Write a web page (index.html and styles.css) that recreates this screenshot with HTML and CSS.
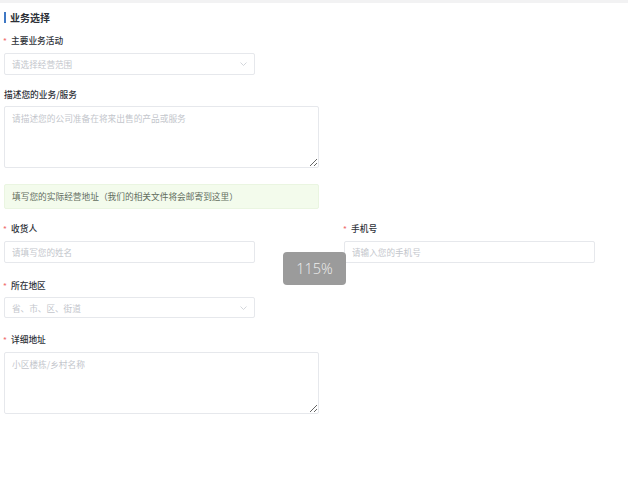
FILE: index.html
```html
<!DOCTYPE html>
<html lang="zh-CN">
<head>
<meta charset="utf-8">
<title>业务选择</title>
<link rel="stylesheet" href="styles.css">
</head>
<body>
<div class="strip"></div>
<div class="page">
  <div class="title"><span class="bar"></span>业务选择</div>

  <div class="field field-first">
    <div class="label"><span class="star">*</span>主要业务活动</div>
    <div class="select">
      <span class="ph">请选择经营范围</span>
      <svg class="arrow" width="7" height="4" viewBox="0 0 7 4"><path d="M0.5 0.5 L3.5 3.5 L6.5 0.5" fill="none" stroke="#c8ccd2" stroke-width="0.8"/></svg>
    </div>
  </div>

  <div class="field field-ta">
    <div class="label label-ta">描述您的业务/服务</div>
    <textarea class="ta" placeholder="请描述您的公司准备在将来出售的产品或服务"></textarea>
  </div>

  <div class="alert">填写您的实际经营地址（我们的相关文件将会邮寄到这里）</div>

  <div class="row">
    <div class="field">
      <div class="label"><span class="star">*</span>收货人</div>
      <input class="input" placeholder="请填写您的姓名">
    </div>
    <div class="field">
      <div class="label"><span class="star">*</span>手机号</div>
      <input class="input" placeholder="请输入您的手机号">
    </div>
  </div>

  <div class="field field-region">
    <div class="label label-ta"><span class="star">*</span>所在地区</div>
    <div class="select select-sm">
      <span class="ph">省、市、区、街道</span>
      <svg class="arrow" width="7" height="4" viewBox="0 0 7 4"><path d="M0.5 0.5 L3.5 3.5 L6.5 0.5" fill="none" stroke="#c8ccd2" stroke-width="0.8"/></svg>
    </div>
  </div>

  <div class="field field-detail">
    <div class="label"><span class="star">*</span>详细地址</div>
    <textarea class="ta" placeholder="小区楼栋/乡村名称"></textarea>
  </div>
</div>
<div class="zoom">115%</div>
</body>
</html>
```

FILE: styles.css
```css
html, body {
  margin: 0;
  padding: 0;
  background: #ffffff;
  font-family: "Noto Sans CJK SC", "Noto Sans", sans-serif;
}
.strip {
  height: 3px;
  background: #f2f2f3;
}
.page {
  padding: 7px 4px 0 4px;
}
.title {
  display: flex;
  align-items: center;
  height: 14px;
  font-size: 10px;
  font-weight: 700;
  color: #2b2f36;
}
.bar {
  width: 2px;
  height: 11px;
  background: #3f78c4;
  margin-right: 4px;
}
.field-first {
  margin-top: 11px;
}
.field-ta {
  margin-top: 14px;
}
.field-region {
  margin-top: 17px;
}
.field-detail {
  margin-top: 16px;
}
.label {
  height: 12px;
  line-height: 12px;
  font-size: 8.7px;
  font-weight: 500;
  color: #2f333a;
  margin-bottom: 6px;
  display: flex;
  align-items: center;
}
.label-ta {
  margin-bottom: 5px;
}
.star {
  color: #f07070;
  font-size: 8px;
  width: 7px;
  margin-left: -1px;
  margin-right: 1px;
}
.select {
  width: 251px;
  height: 22px;
  box-sizing: border-box;
  border: 1px solid #e6e8ec;
  border-radius: 2px;
  display: flex;
  align-items: center;
  justify-content: space-between;
  padding: 0 7px 0 7px;
}
.select-sm {
  height: 21px;
}
.ph {
  font-size: 8.6px;
  color: #c3c6cc;
}
.ta {
  display: block;
  width: 315px;
  height: 62px;
  box-sizing: border-box;
  border: 1px solid #e6e8ec;
  border-radius: 2px;
  padding: 5px 7px;
  margin: 0;
  font-family: "Noto Sans CJK SC", "Noto Sans", sans-serif;
  font-size: 8.7px;
  color: #333;
  outline: none;
}
.ta::placeholder, .input::placeholder {
  color: #c3c6cc;
}
.alert {
  margin-top: 16px;
  width: 315px;
  height: 25px;
  box-sizing: border-box;
  background: #f3fbec;
  border: 1px solid #eaf5e1;
  border-radius: 2px;
  display: flex;
  align-items: center;
  padding-left: 7px;
  font-size: 8.7px;
  color: #626d5e;
}
.row {
  display: grid;
  grid-template-columns: 340px 1fr;
  margin-top: 14px;
}
.input {
  display: block;
  width: 251px;
  height: 22px;
  box-sizing: border-box;
  border: 1px solid #e6e8ec;
  border-radius: 2px;
  padding: 0 7px;
  margin: 0;
  font-family: "Noto Sans CJK SC", "Noto Sans", sans-serif;
  font-size: 8.6px;
  outline: none;
}
.zoom {
  position: absolute;
  left: 283px;
  top: 252px;
  width: 63px;
  height: 33px;
  border-radius: 4px;
  background: #9b9b9b;
  color: #efefef;
  font-family: "Open Sans", sans-serif;
  font-weight: 300;
  font-size: 14.5px;
  display: flex;
  align-items: center;
  justify-content: center;
}
```
